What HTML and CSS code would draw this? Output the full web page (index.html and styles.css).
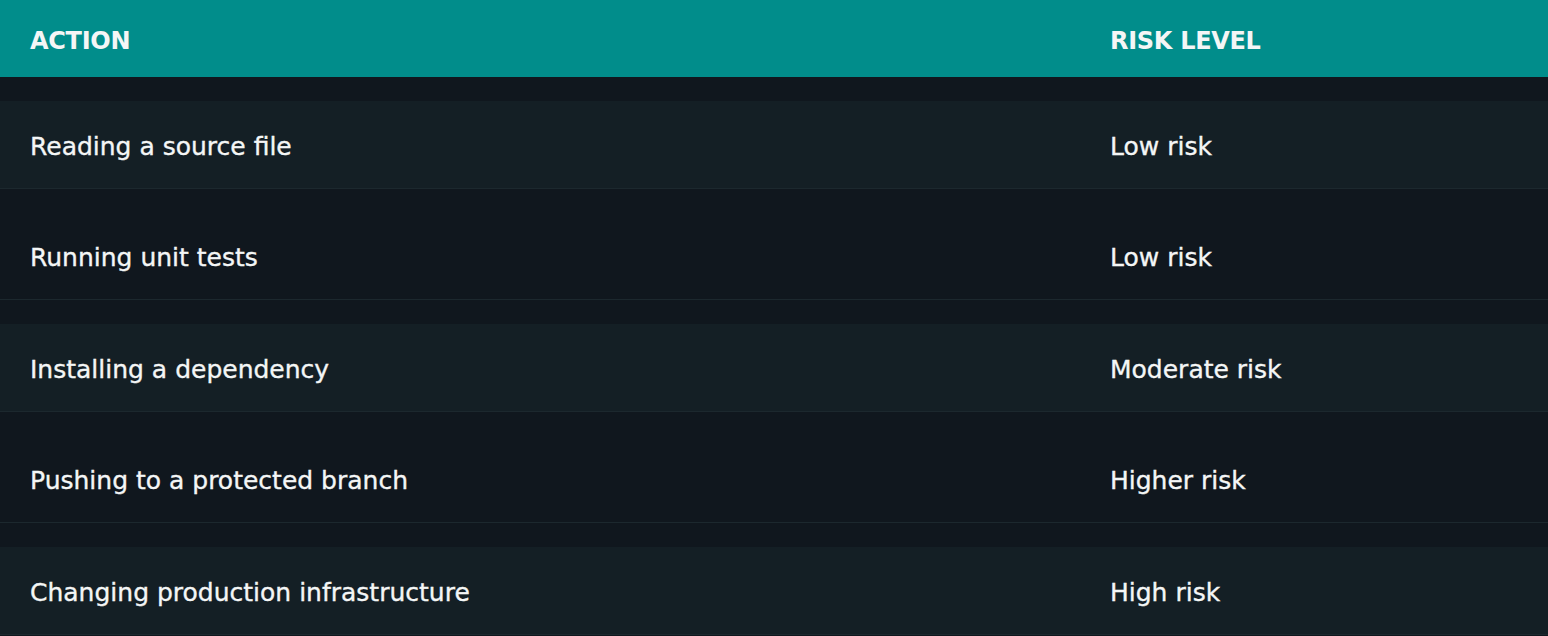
FILE: index.html
```html
<!DOCTYPE html>
<html lang="en">
<head>
<meta charset="utf-8">
<title>Risk levels</title>
<link rel="stylesheet" href="styles.css">
</head>
<body>
<div class="table">
  <div class="head">
    <div class="cell">ACTION</div>
    <div class="cell">RISK LEVEL</div>
  </div>
  <div class="row alt">
    <div class="cells"><div class="cell">Reading a source file</div><div class="cell">Low risk</div></div>
  </div>
  <div class="row">
    <div class="cells"><div class="cell">Running unit tests</div><div class="cell">Low risk</div></div>
  </div>
  <div class="row alt">
    <div class="cells"><div class="cell">Installing a dependency</div><div class="cell">Moderate risk</div></div>
  </div>
  <div class="row">
    <div class="cells"><div class="cell">Pushing to a protected branch</div><div class="cell">Higher risk</div></div>
  </div>
  <div class="row alt">
    <div class="cells"><div class="cell">Changing production infrastructure</div><div class="cell">High risk</div></div>
  </div>
</div>
</body>
</html>
```
FILE: styles.css
```css
html, body {
  margin: 0;
  padding: 0;
  background: #10171e;
}
body {
  font-family: "DejaVu Sans", sans-serif;
  color: #f4f6f6;
}
.table {
  width: 1548px;
}
.head {
  display: grid;
  grid-template-columns: 1080px 1fr;
  align-items: center;
  box-sizing: border-box;
  height: 77px;
  padding-top: 4px;
  background: #018d8b;
  font-weight: 700;
  font-size: 24px;
  letter-spacing: -0.3px;
}
.cell {
  padding-left: 30px;
}
.row {
  padding-top: 23.5px;
  border-bottom: 1px solid #1c282e;
}
.cells {
  display: grid;
  grid-template-columns: 1080px 1fr;
  align-items: center;
  box-sizing: border-box;
  height: 87px;
  padding-top: 4px;
  font-size: 25px;
  -webkit-text-stroke: 0.35px #f4f6f6;
}
.row.alt .cells {
  background: #141f25;
}
```
